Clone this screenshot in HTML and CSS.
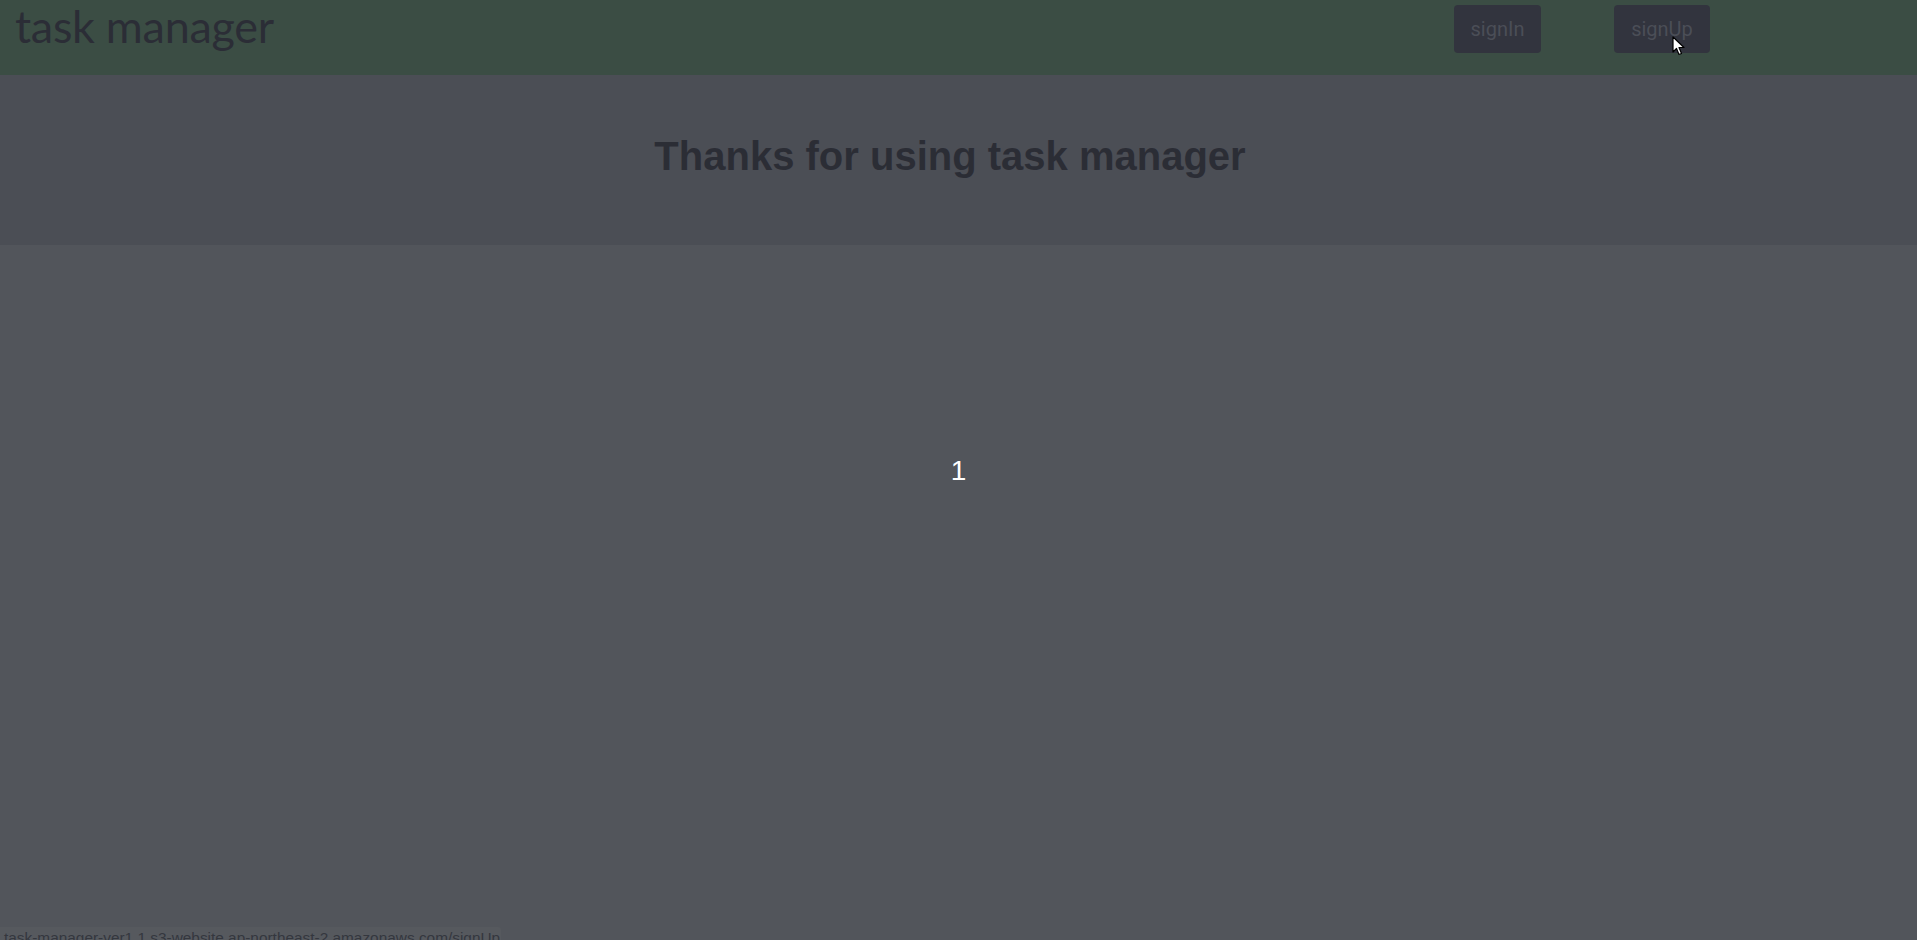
FILE: index.html
```html
<!DOCTYPE html>
<html lang="en">
<head>
<meta charset="utf-8">
<title>task manager</title>
<link rel="stylesheet" href="styles.css">
</head>
<body>
<header class="topbar">
  <h1 class="brand">task manager</h1>
  <nav class="auth">
    <button class="auth-btn">signIn</button>
    <button class="auth-btn auth-btn-wide">signUp</button>
  </nav>
</header>
<section class="hero">
  <h2 class="hero-title">Thanks for using task manager</h2>
</section>
<main class="content">
  <p class="count">1</p>
</main>
<div class="status">task-manager-ver1.1.s3-website.ap-northeast-2.amazonaws.com/signUp</div>
<svg class="cursor" width="14" height="20" viewBox="0 0 14 20"><path d="M1 1 L1 16 L4.5 12.5 L7 18.5 L9.5 17.5 L7 11.5 L12 11.5 Z" fill="#ffffff" stroke="#000000" stroke-width="1.2" stroke-linejoin="round"/></svg>
</body>
</html>
```
FILE: styles.css
```css
html, body {
  margin: 0;
  padding: 0;
}
body {
  width: 1917px;
  height: 940px;
  overflow: hidden;
  background: #52555b;
  font-family: "Liberation Sans", Arial, sans-serif;
  position: relative;
}
.topbar {
  height: 75px;
  background: #3b4d44;
  display: flex;
  align-items: flex-start;
}
.brand {
  margin: 0;
  padding-left: 15px;
  font-family: Lato, "Open Sans", sans-serif;
  font-weight: 400;
  font-size: 45px;
  line-height: 52px;
  color: #2b2d36;
  letter-spacing: -0.3px;
}
.auth {
  margin-left: auto;
  margin-right: 207px;
  padding-top: 5px;
  display: flex;
  gap: 73px;
}
.auth-btn {
  width: 87px;
  height: 48px;
  border: none;
  border-radius: 4px;
  background: #32343e;
  color: #4b4e57;
  font-family: Roboto, "Liberation Sans", sans-serif;
  font-size: 20px;
  padding: 0;
}
.auth-btn-wide {
  width: 96px;
}
.hero {
  height: 170px;
  box-sizing: border-box;
  padding-top: 58px;
  background: #4b4e55;
}
.hero-title {
  margin: 0;
  padding-right: 17px;
  text-align: center;
  font-size: 40px;
  font-weight: 700;
  line-height: 46px;
  color: #2b2d35;
}
.content {
  padding-top: 210px;
}
.count {
  margin: 0;
  text-align: center;
  font-size: 28px;
  line-height: 32px;
  color: #ffffff;
}
.status {
  position: absolute;
  left: 0;
  bottom: 0;
  width: 497px;
  height: 13px;
  overflow: hidden;
  padding-left: 4px;
  background: #56595e;
  border-top-right-radius: 3px;
  color: #34373e;
  font-size: 15.4px;
  line-height: 22px;
}
.cursor {
  position: absolute;
  left: 1672px;
  top: 36px;
}
```
